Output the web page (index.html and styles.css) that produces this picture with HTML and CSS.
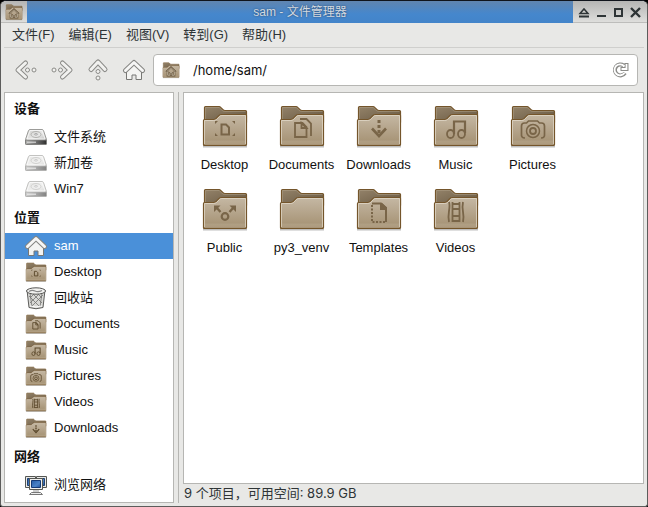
FILE: index.html
```html
<!DOCTYPE html>
<html lang="zh-CN">
<head>
<meta charset="utf-8">
<meta name="viewport" content="width=device-width, initial-scale=1">
<title>sam - 文件管理器</title>
<link rel="stylesheet" href="styles.css">
</head>
<body>
<svg class="defs" aria-hidden="true">
  <defs>
    <linearGradient id="front" x1="0" y1="0" x2="0" y2="1"><stop offset="0" stop-color="#c5b8a4"/><stop offset="1" stop-color="#a38f70"/></linearGradient>
    <linearGradient id="back" x1="0" y1="0" x2="1" y2="1"><stop offset="0" stop-color="#94836a"/><stop offset="1" stop-color="#66563f"/></linearGradient>
    <linearGradient id="disk" x1="0" y1="0" x2="1" y2="1"><stop offset="0" stop-color="#cfcfcd"/><stop offset=".5" stop-color="#e8e8e7"/><stop offset="1" stop-color="#b0b0ad"/></linearGradient>
    <linearGradient id="edge" x1="0" y1="0" x2="1" y2="0"><stop offset="0" stop-color="#b0b0ae"/><stop offset=".5" stop-color="#707070"/><stop offset="1" stop-color="#30302f"/></linearGradient>
    <linearGradient id="screen" x1="0" y1="0" x2="1" y2="1"><stop offset="0" stop-color="#245ca8"/><stop offset=".6" stop-color="#4a83c8"/><stop offset="1" stop-color="#1d4f98"/></linearGradient>
  </defs>
  <symbol id="folder" viewBox="0 0 48 48">
    <path d="M2 44.500h44" stroke="#000" stroke-opacity=".25" stroke-width="2"/>
    <path d="M3.500 20V5.500q0-1 1-1H18q1 0 1.700.8l2.300 2.400q.8.8 2 .8h20.500q1 0 1 1V20z" fill="url(#back)" stroke="#74552b" stroke-width="1.200"/>
    <path d="M4.500 17V5.500H18.300l3 3.100q1 .9 2.400.9h20.800" fill="none" stroke="#b4a58c" stroke-opacity=".6" stroke-width=".8"/>
    <path d="M2.500 18.500q0-1 1-1h9q1.500 0 2.400-.9l3.200-3.200q.9-.9 2.200-.9h24.200q1 0 1 1v29q0 1-1 1h-41q-1 0-1-1z" fill="url(#front)" stroke="#74552b" stroke-width="1.200"/>
    <path d="M3.500 42V18.500h9.300q1.600 0 2.700-1l3.200-3.200q.8-.8 2-.8h23.800V42" fill="none" stroke="#e2d9c9" stroke-opacity=".75"/>
    <path d="M4 38.500h40v4H4z" fill="#d9cebc" opacity=".18"/>
  </symbol>
  <symbol id="g-desktop" viewBox="0 0 48 48">
    <path d="M20.500 22.500h4.500l3 3v7h-7.500z" fill="none" stroke="currentColor" stroke-width="2"/>
    <path d="M14 22v-3h3zM34 22v-3h-3zM14 31v3h3zM34 31v3h-3z" fill="currentColor"/>
  </symbol>
  <symbol id="g-documents" viewBox="0 0 48 48">
    <path d="M17 21h7.500l4 4v10H17z" fill="none" stroke="currentColor" stroke-width="1.800"/>
    <path d="M23.500 21v5h5zM22 17h6.500l4.500 4.500V34" fill="none" stroke="currentColor" stroke-width="1.800"/>
  </symbol>
  <symbol id="g-downloads" viewBox="0 0 48 48">
    <path d="M22.500 18h3v3h-3zM22.500 23h3v3h-3zM22.500 28h3v3h-3z" fill="currentColor"/>
    <path d="M17 26.500l7 7.500 7-7.500" fill="none" stroke="currentColor" stroke-width="2.600"/>
  </symbol>
  <symbol id="g-music" viewBox="0 0 48 48">
    <path d="M22 32V19.500h11V31" fill="none" stroke="currentColor" stroke-width="2.200"/>
    <ellipse cx="18.500" cy="32" rx="3.500" ry="4" fill="none" stroke="currentColor" stroke-width="1.800"/>
    <ellipse cx="29.500" cy="32" rx="3.500" ry="4" fill="none" stroke="currentColor" stroke-width="1.800"/>
  </symbol>
  <symbol id="g-pictures" viewBox="0 0 48 48">
    <path d="M16 36q-4 0-3.500-4v-8q0-3 3-3h2l2-2h9l2 2h2q3 0 3 3v8q.5 4-3.500 4" fill="none" stroke="currentColor" stroke-width="1.700"/>
    <circle cx="24" cy="29" r="6.500" fill="none" stroke="currentColor" stroke-width="1.500"/>
    <circle cx="24" cy="29" r="3" fill="none" stroke="currentColor" stroke-width="1.800"/>
  </symbol>
  <symbol id="g-public" viewBox="0 0 48 48">
    <circle cx="24" cy="31.500" r="3.300" fill="none" stroke="currentColor" stroke-width="2.200"/>
    <path d="M15 22l4.500 5M33 22l-4.500 5" stroke="currentColor" stroke-width="2.400"/>
    <path d="M13 20.500h6.500L13 27zM35 20.500h-6.500L35 27z" fill="currentColor"/>
  </symbol>
  <symbol id="g-templates" viewBox="0 0 48 48">
    <path d="M17 18.500h9l5 4.500V37" fill="none" stroke="currentColor" stroke-width="2"/>
    <path d="M25 18h2l5 4.500V25h-7z" fill="currentColor"/>
    <path d="M17 20v17h14" fill="none" stroke="currentColor" stroke-width="2" stroke-dasharray="2 1.500"/>
  </symbol>
  <symbol id="g-videos" viewBox="0 0 48 48">
    <path d="M17 17q1 3 0 9t0 11M31 17q-1 5 0 10t0 10M20.500 17v20M27.500 17v20M20.500 19h7M20.500 24h7M20.500 31h7M20.500 36h7" fill="none" stroke="currentColor" stroke-width="1.800"/>
  </symbol>
  <symbol id="g-home" viewBox="0 0 48 48">
    <path d="M11 29l13-12 13 12M15 28v11h6v-7h6v7h6V28" fill="none" stroke="#66543b" stroke-width="5"/>
    <path d="M12 29l12-11 12 11M15 29v9h6v-7h6v7h6v-9" fill="none" stroke="#d0c5b3" stroke-width="2"/>
  </symbol>
  <symbol id="chevron" viewBox="0 0 24 24">
    <path d="M11.500 5L4 12l7.500 7" fill="none" stroke="#8b8b88" stroke-width="5" stroke-linecap="round" stroke-linejoin="round"/>
    <path d="M11.500 5L4 12l7.500 7" fill="none" stroke="#f1f1ef" stroke-width="3" stroke-linecap="round" stroke-linejoin="round"/>
    <circle cx="13.500" cy="12" r="2" fill="#f1f1ef" stroke="#8b8b88"/>
    <circle cx="20" cy="12" r="2" fill="#f1f1ef" stroke="#8b8b88"/>
  </symbol>
  <symbol id="house" viewBox="0 0 24 24">
    <path d="M4.500 12v9.500h5.500V17h4v4.500h5.500V12L12 6z" fill="#f4f4f2" stroke="#777774"/>
    <path d="M3.500 12.500L12 4.500l8.500 8" fill="none" stroke="#858582" stroke-width="5" stroke-linecap="round" stroke-linejoin="round"/>
    <path d="M3.500 12.500L12 4.500l8.500 8" fill="none" stroke="#f6f6f5" stroke-width="3" stroke-linecap="round" stroke-linejoin="round"/>
  </symbol>
  <symbol id="drive" viewBox="0 0 24 24">
    <path d="M4.500 5.500q.5-1 1.500-1h12q1 0 1.500 1l3 9v4q0 1-1 1h-19q-1 0-1-1v-4z" fill="url(#disk)" stroke="#9c9c99"/>
    <path d="M1.500 15h21v3.500q0 1-1 1h-19q-1 0-1-1z" fill="url(#edge)" stroke="#80807e"/>
    <path d="M6 5.500h12l3 8.500H3z" fill="none" stroke="#fafafa" stroke-opacity=".8"/>
    <ellipse cx="12" cy="9.500" rx="5" ry="3" fill="none" stroke="#b2b2af"/>
    <ellipse cx="12" cy="9.300" rx="1.600" ry=".8" fill="none" stroke="#a0a0a0" stroke-width=".8"/>
    <path d="M3 17.200h9" stroke="#e4e4e4"/>
  </symbol>
</svg>

<div class="window">
  <header class="titlebar">
    <button class="title-menu" aria-label="窗口菜单"><svg class="folder folder-mini" aria-hidden="true"><use href="#folder"/><use href="#g-home"/></svg></button>
    <h1 class="title">sam - 文件管理器</h1>
    <div class="controls">
      <button aria-label="卷起"><svg viewBox="0 0 12 12"><path d="M2 7.500L6 3l4 4.500z" fill="none" stroke="currentColor" stroke-width="1.500"/><path d="M1 10.500h10" stroke="currentColor" stroke-width="2"/></svg></button>
      <button aria-label="最小化"><svg viewBox="0 0 12 12"><path d="M2 10h9" stroke="currentColor" stroke-width="2"/></svg></button>
      <button aria-label="最大化"><svg viewBox="0 0 12 12"><path d="M3 3h7v7H3z" fill="none" stroke="currentColor" stroke-width="2"/></svg></button>
      <button aria-label="关闭"><svg viewBox="0 0 12 12"><path d="M2 2l9 9M11 2l-9 9" stroke="currentColor" stroke-width="2.400"/></svg></button>
    </div>
  </header>

  <nav class="menubar" aria-label="菜单">
    <button>文件(F)</button>
    <button>编辑(E)</button>
    <button>视图(V)</button>
    <button>转到(G)</button>
    <button>帮助(H)</button>
  </nav>

  <div class="toolbar">
    <div class="nav-buttons">
      <button aria-label="后退"><svg viewBox="0 0 24 24"><use href="#chevron"/></svg></button>
      <button aria-label="前进"><svg viewBox="0 0 24 24"><use href="#chevron" transform="translate(24 0) scale(-1 1)"/></svg></button>
      <button aria-label="上级"><svg viewBox="0 0 24 24"><use href="#chevron" transform="translate(24 0) rotate(90)"/></svg></button>
      <button aria-label="主目录"><svg viewBox="0 0 24 24"><use href="#house"/></svg></button>
    </div>
    <div class="address">
      <svg class="folder folder-mini" aria-hidden="true"><use href="#folder"/><use href="#g-home"/></svg>
      <input type="text" aria-label="位置" value="/home/sam/" spellcheck="false">
      <button aria-label="重新载入"><svg viewBox="0 0 18 18"><path d="M12.700 4.500A5.500 5.500 0 1 0 14 12M15.500 2v6h-6" fill="none" stroke="#8b8b88" stroke-width="4"/><path d="M13.200 5.200A5.500 5.500 0 1 0 13.500 12M15.500 3v5h-5" fill="none" stroke="#fff" stroke-width="1.800"/></svg></button>
    </div>
  </div>

  <div class="body">
    <aside class="sidebar">
      <h2>设备</h2>
      <a href="#"><svg class="icon"><use href="#drive"/></svg>文件系统</a>
      <a href="#"><svg class="icon dim"><use href="#drive"/></svg>新加卷</a>
      <a href="#"><svg class="icon dim"><use href="#drive"/></svg>Win7</a>
      <h2>位置</h2>
      <a href="#" class="selected" aria-current="page"><svg class="icon"><use href="#house"/></svg>sam</a>
      <a href="#"><svg class="icon folder"><use href="#folder"/><use href="#g-desktop"/></svg>Desktop</a>
      <a href="#"><svg class="icon" viewBox="0 0 24 24"><path d="M3 4l2 17.500q7 2.500 14 0L21 4z" fill="#d9d9d6" stroke="#5c5c5a"/><path d="M6 7l2 14M18 7l-2 14M5 10l11 11M9 8l9 9M14 8l4 4M19 9L8 20M15 8l-9 9M10 8l-4 4" stroke="#747471" stroke-width=".8"/><ellipse cx="12" cy="5" rx="9.500" ry="3.200" fill="#f2f2f0" stroke="#565654"/><path d="M5 5.500q3-2 6-.5t7-.5" fill="none" stroke="#888" stroke-width="1.200"/><path d="M6 20q6 2 12 0" fill="none" stroke="#fff"/></svg>回收站</a>
      <a href="#"><svg class="icon folder"><use href="#folder"/><use href="#g-documents"/></svg>Documents</a>
      <a href="#"><svg class="icon folder"><use href="#folder"/><use href="#g-music"/></svg>Music</a>
      <a href="#"><svg class="icon folder"><use href="#folder"/><use href="#g-pictures"/></svg>Pictures</a>
      <a href="#"><svg class="icon folder"><use href="#folder"/><use href="#g-videos"/></svg>Videos</a>
      <a href="#"><svg class="icon folder"><use href="#folder"/><use href="#g-downloads"/></svg>Downloads</a>
      <h2>网络</h2>
      <a href="#"><svg class="icon" viewBox="0 0 24 24"><path d="M1.500 3.500h10v11h-10zM12.500 3.500h10v11h-10z" fill="#e9e9e7" stroke="#555753"/><path d="M3.500 5.500h6v7h-6zM14.500 5.500h6v7h-6z" fill="url(#screen)" stroke="#20406f"/><path d="M9 16h6v3H9z" fill="#ccc"/><path d="M5.500 5.500h13v11h-13z" fill="#f0f0ee" stroke="#555753"/><path d="M7.500 7.500h9v7h-9z" fill="url(#screen)" stroke="#143a75"/><path d="M5.500 21.500l2-2h9l2 2z" fill="#eee" stroke="#777"/></svg>浏览网络</a>
    </aside>
    <div class="splitter"></div>
    <main class="content">
      <div class="files">
        <a href="#"><svg class="folder"><use href="#folder"/><use href="#g-desktop"/></svg><span>Desktop</span></a>
        <a href="#"><svg class="folder"><use href="#folder"/><use href="#g-documents"/></svg><span>Documents</span></a>
        <a href="#"><svg class="folder"><use href="#folder"/><use href="#g-downloads"/></svg><span>Downloads</span></a>
        <a href="#"><svg class="folder"><use href="#folder"/><use href="#g-music"/></svg><span>Music</span></a>
        <a href="#"><svg class="folder"><use href="#folder"/><use href="#g-pictures"/></svg><span>Pictures</span></a>
        <a href="#"><svg class="folder"><use href="#folder"/><use href="#g-public"/></svg><span>Public</span></a>
        <a href="#"><svg class="folder"><use href="#folder"/></svg><span>py3_venv</span></a>
        <a href="#"><svg class="folder"><use href="#folder"/><use href="#g-templates"/></svg><span>Templates</span></a>
        <a href="#"><svg class="folder"><use href="#folder"/><use href="#g-videos"/></svg><span>Videos</span></a>
      </div>
      <footer class="status">9 个项目，可用空间: 89.9 GB</footer>
    </main>
  </div>
</div>
</body>
</html>
```
FILE: styles.css
```css
* { box-sizing: border-box; }

body {
  margin: 0;
  background: #000;
  color: #111;
  font: 13px/18px "Liberation Sans", "Noto Sans CJK SC", sans-serif;
}

button, input { font: inherit; color: inherit; }
button { padding: 0; border: 0; background: none; }
a { color: inherit; text-decoration: none; }
svg { display: block; flex: none; }
.defs { position: absolute; width: 0; height: 0; }

.window {
  display: flex;
  flex-direction: column;
  min-height: 100vh;
  overflow: hidden;
  border: 1px solid #5c5c5b;
  border-top-color: #10141c;
  border-radius: 6px 6px 3px 3px;
  background: #e8e8e6;
}

/* Title bar */
.titlebar {
  display: flex;
  height: 22px;
  border-bottom: 1px solid #bdbdbb;
  background: linear-gradient(#b5b5b4, #dededc);
}
.title-menu {
  display: flex;
  align-items: center;
  justify-content: center;
  width: 26px;
}
.title {
  flex: 1;
  margin: 0;
  background: linear-gradient(#6085b0, #4587cd 60%, #4384c9);
  color: #d3dae2;
  font-size: 12px;
  font-weight: 400;
  line-height: 22px;
  height: 22px;
  text-align: center;
  text-shadow: 0 0 2px #24405f;
}
.controls {
  display: flex;
  align-items: center;
  gap: 5px;
  padding: 0 6px 0 5px;
  color: #2e3436;
}
.controls svg { width: 12px; height: 12px; }

.folder { width: 48px; height: 48px; color: #796548; }
.folder-mini { width: 18px; height: 18px; }

/* Menu bar */
.menubar {
  display: flex;
  height: 25px;
  margin: 0 3px;
  padding-left: 1px;
  border-bottom: 1px solid #cfcfcd;
  color: #2e3436;
}
.menubar button { padding: 0 7px; }

/* Toolbar */
.toolbar {
  display: flex;
  align-items: center;
  gap: 7px;
  height: 44px;
  padding: 0 9px 0 13px;
}
.nav-buttons { display: flex; gap: 12px; }
.nav-buttons svg { width: 24px; height: 24px; }
.address {
  display: flex;
  flex: 1;
  align-items: center;
  height: 32px;
  padding: 0 8px;
  border: 1px solid #b6b6b3;
  border-radius: 4px;
  background: #fff;
}
.address input {
  flex: 1;
  min-width: 0;
  padding: 0 13px;
  border: 0;
  outline: 0;
  background: none;
  font-family: Inter, "Noto Sans CJK SC", sans-serif;
}
.address button svg { width: 18px; height: 18px; }

/* Side pane and file view */
.body { display: flex; flex: 1; padding: 0 3px 3px; }
.sidebar {
  flex: none;
  width: 170px;
  border: 1px solid #b6b6b3;
  background: #fff;
}
.sidebar h2 {
  margin: 0;
  padding-left: 9px;
  font-size: 13px;
  font-weight: 700;
  line-height: 31px;
}
.sidebar a {
  display: flex;
  align-items: center;
  gap: 6px;
  height: 26px;
  padding-left: 19px;
}
.sidebar .selected { background: #4a90d9; color: #fff; }
.icon { width: 24px; height: 24px; }
.icon.folder { width: 24px; height: 22px; color: #594629; }
.dim { opacity: .6; }
.splitter {
  width: 1px;
  margin: 0 4px;
  background: #b6b6b3;
}
.content {
  display: flex;
  flex: 1;
  flex-direction: column;
  min-width: 0;
}
.files {
  display: grid;
  flex: 1;
  grid-template-columns: repeat(auto-fill, 77px);
  grid-auto-rows: 83px;
  padding: 9px 2px;
  border: 1px solid #b6b6b3;
  background: #fff;
}
.files a {
  display: flex;
  flex-direction: column;
  align-items: center;
  gap: 6px;
}
.status {
  height: 19px;
  padding-left: 1px;
  color: #2e3436;
  font-family: Inter, "Noto Sans CJK SC", sans-serif;
}
```
